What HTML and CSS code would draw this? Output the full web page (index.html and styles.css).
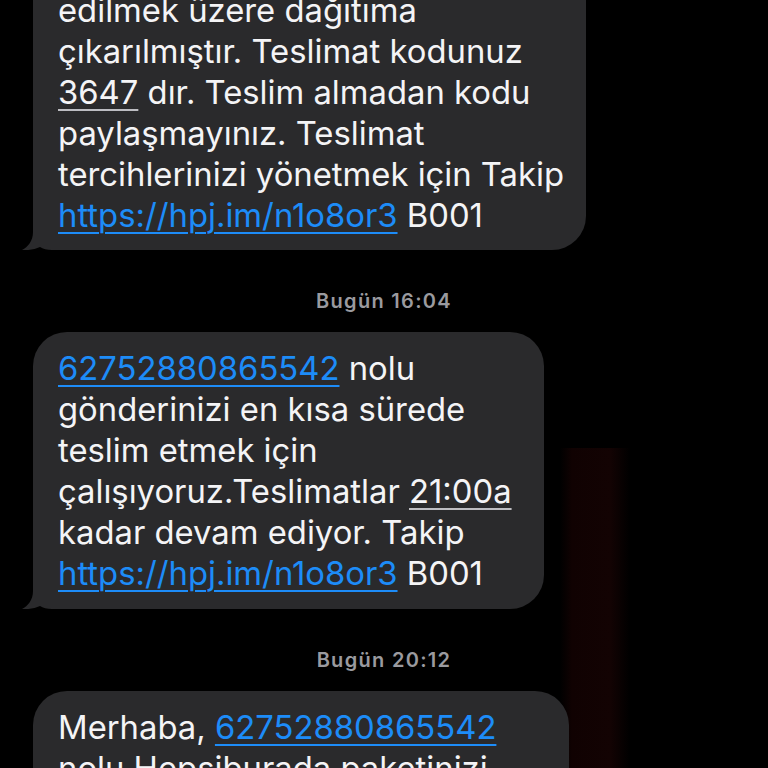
FILE: index.html
```html
<!DOCTYPE html>
<html lang="tr">
<head>
<meta charset="utf-8">
<title>Mesajlar</title>
<link rel="stylesheet" href="styles.css">
</head>
<body>
<div class="thread">
  <div class="bubble b1">
    <svg class="tail" width="52" height="34" viewBox="0 0 52 34"><path d="M11 0 H52 V34 H30 C25 34 21 33 18 31 C13 33.5 6 34.5 0 34 C6 31 11 25 11 16 Z"/></svg>
    <span class="line">edilmek üzere dağıtıma</span>
    <span class="line">çıkarılmıştır. Teslimat kodunuz</span>
    <span class="line"><span class="data">3647</span> dır. Teslim almadan kodu</span>
    <span class="line">paylaşmayınız. Teslimat</span>
    <span class="line">tercihlerinizi yönetmek için Takip</span>
    <span class="line"><a class="link" href="#">https://hpj.im/n1o8or3</a> B001</span>
  </div>
  <div class="stamp">Bugün 16:04</div>
  <div class="bubble b2">
    <svg class="tail" width="52" height="34" viewBox="0 0 52 34"><path d="M11 0 H52 V34 H30 C25 34 21 33 18 31 C13 33.5 6 34.5 0 34 C6 31 11 25 11 16 Z"/></svg>
    <span class="line"><a class="link" href="#">62752880865542</a> nolu</span>
    <span class="line">gönderinizi en kısa sürede</span>
    <span class="line">teslim etmek için</span>
    <span class="line">çalışıyoruz.Teslimatlar <span class="data">21:00a</span></span>
    <span class="line">kadar devam ediyor. Takip</span>
    <span class="line"><a class="link" href="#">https://hpj.im/n1o8or3</a> B001</span>
  </div>
  <div class="stamp">Bugün 20:12</div>
  <div class="bubble b3">
    <span class="line">Merhaba, <a class="link" href="#">62752880865542</a></span>
    <span class="line">nolu Hepsiburada paketinizi</span>
    <span class="line">teslim etmek için yola çıktık.</span>
  </div>
</div>
</body>
</html>
```

FILE: styles.css
```css
html, body {
  margin: 0;
  padding: 0;
}
body {
  width: 768px;
  height: 768px;
  overflow: hidden;
  background:
    linear-gradient(90deg, rgba(0,0,0,0) 0, rgba(0,0,0,0) 560px, #100202 572px, #130303 610px, rgba(0,0,0,0) 630px) no-repeat 0 448px / 768px 320px,
    #000;
  font-family: Inter, "Noto Sans", sans-serif;
  color: #f4f4f6;
}
.thread {
  display: flex;
  flex-direction: column;
  align-items: flex-start;
  padding-left: 33px;
}
.bubble {
  position: relative;
  box-sizing: border-box;
  background: #2a2a2c;
  border-radius: 34px;
  padding: 15px 0 14px 25px;
  font-size: 32.8px;
  line-height: 41px;
  display: flex;
  flex-direction: column;
}
.line {
  position: relative;
  z-index: 1;
  display: block;
  white-space: nowrap;
}
.b1 {
  width: 553px;
  margin-top: -100px;
  padding-top: 90px;
}
.b2 {
  width: 511px;
  padding-top: 16px;
  padding-bottom: 15px;
}
.b3 {
  width: 536px;
  padding-top: 16px;
}
.link {
  color: #1d8cf8;
  text-decoration: underline;
  text-decoration-thickness: 2px;
  text-underline-offset: 5px;
}
.data {
  text-decoration: underline;
  text-decoration-color: #bdbdc2;
  text-decoration-thickness: 1.5px;
  text-underline-offset: 5px;
}
.tail {
  position: absolute;
  z-index: 0;
  left: -11px;
  bottom: 0;
  fill: #2a2a2c;
}
.stamp {
  align-self: stretch;
  margin-left: -33px;
  text-align: center;
  font-size: 20px;
  line-height: 24px;
  font-weight: 600;
  letter-spacing: 1.3px;
  color: #9a9a9f;
  margin-top: 39px;
  margin-bottom: 19px;
}
```
